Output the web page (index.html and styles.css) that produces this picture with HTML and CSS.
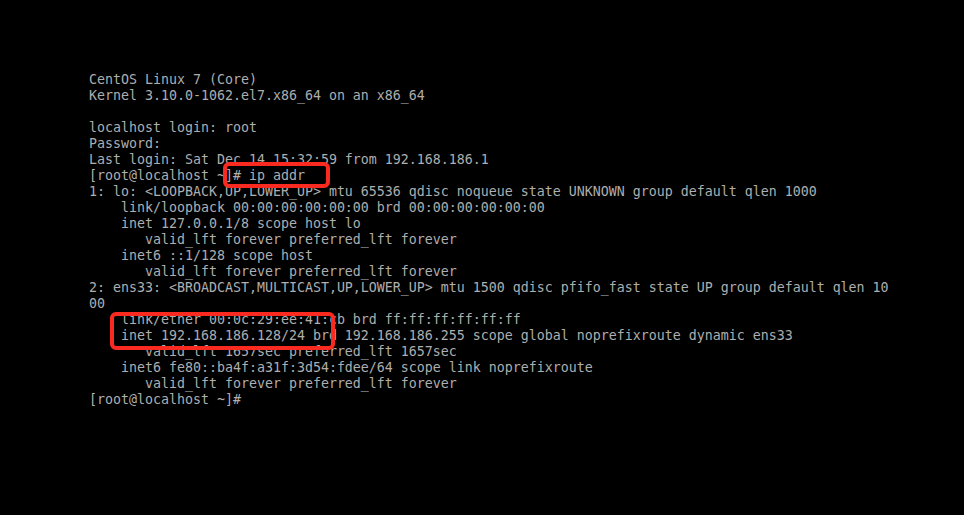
FILE: index.html
```html
<!DOCTYPE html>
<html>
<head>
<meta charset="utf-8">
<link rel="stylesheet" href="styles.css">
</head>
<body>
<div class="screen">
<pre class="console">CentOS Linux 7 (Core)
Kernel 3.10.0-1062.el7.x86_64 on an x86_64

localhost login: root
Password:
Last login: Sat Dec 14 15:32:59 from 192.168.186.1
[root@localhost ~]# ip addr
1: lo: &lt;LOOPBACK,UP,LOWER_UP&gt; mtu 65536 qdisc noqueue state UNKNOWN group default qlen 1000
    link/loopback 00:00:00:00:00:00 brd 00:00:00:00:00:00
    inet 127.0.0.1/8 scope host lo
       valid_lft forever preferred_lft forever
    inet6 ::1/128 scope host
       valid_lft forever preferred_lft forever
2: ens33: &lt;BROADCAST,MULTICAST,UP,LOWER_UP&gt; mtu 1500 qdisc pfifo_fast state UP group default qlen 10
00
    link/ether 00:0c:29:ee:41:cb brd ff:ff:ff:ff:ff:ff
    inet 192.168.186.128/24 brd 192.168.186.255 scope global noprefixroute dynamic ens33
       valid_lft 1657sec preferred_lft 1657sec
    inet6 fe80::ba4f:a31f:3d54:fdee/64 scope link noprefixroute
       valid_lft forever preferred_lft forever
[root@localhost ~]#</pre>
<div class="mark mark-cmd"></div>
<div class="mark mark-inet"></div>
</div>
</body>
</html>
```
FILE: styles.css
```css
html, body {
  margin: 0;
  padding: 0;
  background: #000;
}
.screen {
  position: relative;
  width: 964px;
  height: 515px;
  background: #000;
  overflow: hidden;
}
.console {
  margin: 0;
  padding: 72px 0 0 89px;
  font-family: "DejaVu Sans Mono", "Liberation Mono", monospace;
  font-size: 13.29px;
  line-height: 16px;
  color: #aeaeae;
  white-space: pre;
}
.mark {
  position: absolute;
  border: 4px solid #fa2a20;
  border-radius: 6px;
  box-sizing: border-box;
}
.mark-cmd {
  left: 223px;
  top: 162px;
  width: 107px;
  height: 26px;
}
.mark-inet {
  left: 110px;
  top: 312px;
  width: 225px;
  height: 38px;
}
```
